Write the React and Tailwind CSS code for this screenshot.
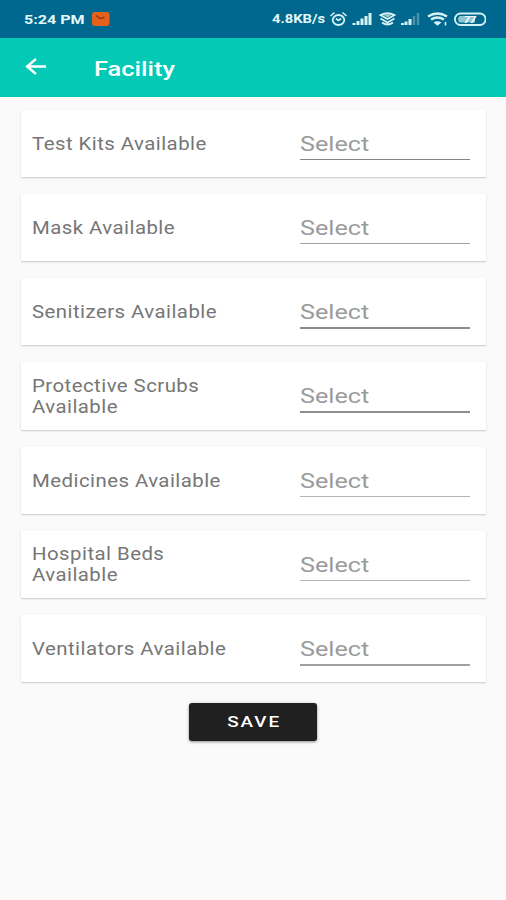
const facilities = [
  { label: ["Test Kits Available"], line: "bg-[#858585]" },
  { label: ["Mask Available"], line: "bg-[#a3a3a3]" },
  { label: ["Senitizers Available"], line: "bg-[#8d8d8d]" },
  { label: ["Protective Scrubs", "Available"], line: "bg-[#8d8d8d]" },
  { label: ["Medicines Available"], line: "bg-[#b5b5b5]" },
  { label: ["Hospital Beds", "Available"], line: "bg-[#b5b5b5]" },
  { label: ["Ventilators Available"], line: "bg-[#a0a0a0]" },
];

function StatusIcons() {
  return (
    <svg width="160" height="20" viewBox="0 0 160 20" fill="none" stroke="#d5f3f5" strokeWidth="1.6">
      {/* alarm clock */}
      <ellipse cx="12.5" cy="11" rx="5.8" ry="5" strokeWidth="1.8" />
      <path d="M4.500 7 8.500 3.500M16.500 3.500 20.500 7M9.800 9.500 12.500 11.500 15.200 9.500" strokeWidth="1.6" />
      {/* first SIM signal */}
      <path d="M28 16v-2M32 16v-4M36 16V9.5M40 16V7M44 16V4" strokeWidth="3" />
      {/* secondary network */}
      <path d="M54.500 6q7-3.500 14 0L61.500 10zM54.500 9.500 61.500 13.500 68.500 9.500M56 13.500q5.500 4 11 0" strokeWidth="1.800" />
      <path d="M57 5.500h9l-4.500 3z" fill="#d5f3f5" stroke="none" opacity=".7" />
      {/* second SIM signal */}
      <path d="M76.500 16v-2M80 16v-3.500M84 16v-6" strokeWidth="3" />
      <path d="M88 16V7M92 16V4" strokeWidth="2.400" stroke="#4c91ac" />
      {/* wifi */}
      <path d="M102 7.500q9.500-6 19 0M105 10.500q6.500-4 13 0" strokeWidth="2.300" />
      <path d="m107.500 13.500q4-2.500 8 0l-4 3.200z" fill="#d5f3f5" stroke="none" />
      <path d="M119.500 13v3.500" strokeWidth="1.600" />
      {/* battery */}
      <rect x="129" y="4.500" width="30.500" height="11.500" rx="5.500" strokeWidth="1.800" />
      <path d="M133.500 7H149v6.500h-15.500q-3-3.250 0-6.500z" fill="#8ec6d3" stroke="none" />
      <text x="138" y="13.700" fill="#ffffff" stroke="none" fontFamily="Roboto, sans-serif" fontSize="9.500" fontWeight="700" fontStyle="italic" textLength="12" lengthAdjust="spacingAndGlyphs">77</text>
    </svg>
  );
}

function FacilityCard({ label, line }) {
  return (
    <div className="flex h-[67.25px] shrink-0 items-center rounded-[1px] bg-white pl-[11px] shadow-[0_1px_2px_rgba(0,0,0,0.2)]">
      <div className="w-[268px] text-[18px] leading-[21px] text-[#767676]">
        {label.map((text) => (
          <div key={text} className="origin-left scale-x-[1.133] whitespace-nowrap tracking-[0.4px]">{text}</div>
        ))}
      </div>
      <div className="flex h-full w-[170px] flex-col pt-[22px]">
        <div className="h-[27px] origin-left scale-x-[1.2] text-[21px] leading-[25px] text-[#9b9b9b]">Select</div>
        <div className={`h-[1.5px] w-full ${line}`} />
      </div>
    </div>
  );
}

export default function App() {
  return (
    <div className="flex h-[900px] w-[506px] flex-col overflow-hidden bg-[#fafafa] font-['Roboto',sans-serif]">
      <div className="flex h-[37.500px] shrink-0 items-center bg-[#00678e] pl-6 text-[#e2f8fa]">
        <div className="w-[68px] origin-left scale-x-[1.19] whitespace-nowrap text-[13.500px] font-bold">5:24 PM</div>
        <svg className="shrink-0" width="18" height="14" viewBox="0 0 18 14">
          <rect width="17.500" height="14" rx="3" fill="#e5611b" />
          <path d="M4 3.500 8 6.500 12.500 5.500" fill="none" stroke="#87391d" strokeWidth="1.400" />
        </svg>
        <div className="ml-[162px] w-[54px] shrink-0 origin-left scale-x-[1.23] whitespace-nowrap pt-px text-[12px] font-bold">4.8KB/s</div>
        <div className="shrink-0"><StatusIcons /></div>
      </div>
      <div className="flex h-[59px] shrink-0 items-center bg-[#04c9b5] pl-[25px] text-white">
        <svg className="shrink-0" width="22" height="18" viewBox="0 0 22 18" fill="none" stroke="currentColor" strokeWidth="2.300">
          <path d="M21 8.500H2M11 1 2 8.500l9 7.500" />
        </svg>
        <h1 className="ml-[47px] origin-left scale-x-[1.21] pt-[3px] text-[21px] leading-6 font-medium">Facility</h1>
      </div>
      <main className="flex flex-col gap-[17px] pt-[13px] pr-5 pl-[21px]">
        {facilities.map((item) => <FacilityCard key={item.label[0]} {...item} />)}
      </main>
      <button className="mt-[20.500px] ml-[189px] flex h-[38px] w-[128px] shrink-0 items-center justify-center rounded-[3px] bg-[#202020] text-white shadow-[0_1px_3px_rgba(0,0,0,0.45)]">
        <span className="ml-[2px] scale-x-[1.22] pt-[2px] text-[15.500px] font-medium tracking-[1.600px]">SAVE</span>
      </button>
    </div>
  );
}
